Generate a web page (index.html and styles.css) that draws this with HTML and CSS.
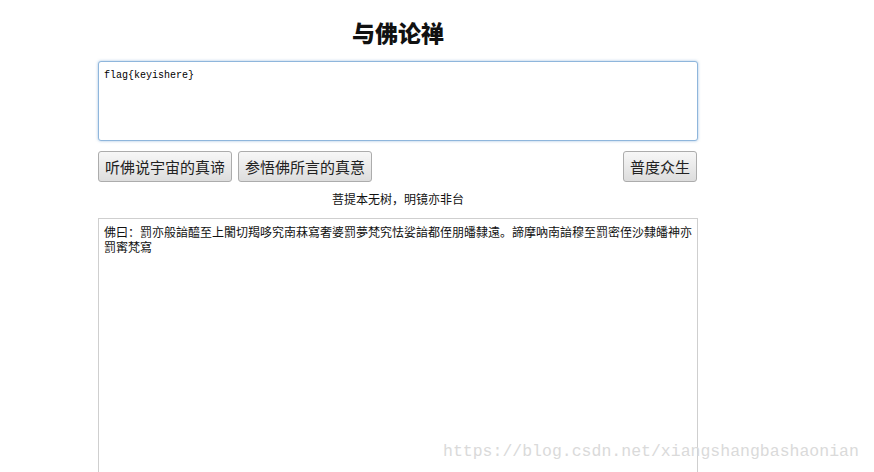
FILE: index.html
```html
<html>

<head>
  <meta charset="utf8">
  <title>与佛论禅</title>
  <link rel="stylesheet" href="styles.css">
</head>

<body>
  <div class="page">
    <h1 class="title">与佛论禅</h1>
    <textarea class="box box-input" spellcheck="false">flag{keyishere}</textarea>
    <div class="actions">
      <button class="btn">听佛说宇宙的真谛</button>
      <button class="btn">参悟佛所言的真意</button>
      <button class="btn btn-right">普度众生</button>
    </div>
    <p class="motto">菩提本无树，明镜亦非台</p>
    <textarea class="box box-output" spellcheck="false" readonly>佛曰：罰亦般諳醯至上闍切羯哆究南菻寫奢婆罰夢梵究怯娑諳都侄朋皤隸遠。諦摩吶南諳穆至罰密侄沙隸皤神亦罰寗梵寫</textarea>
  </div>
  <div class="watermark">https://blog.csdn.net/xiangshangbashaonian</div>
</body>

</html>
```
FILE: styles.css
```css
html,
body {
  margin: 0;
  overflow: hidden;
  background: #fff;
}

body {
  font: 12px/18px "Noto Sans CJK SC", "Liberation Sans", sans-serif;
  color: #111;
}

.page {
  width: 600px;
  margin-left: 98px;
  display: flex;
  flex-direction: column;
}

.title {
  margin: 0;
  padding-top: 17px;
  font-size: 23px;
  line-height: 30px;
  font-weight: 900;
  text-align: center;
  color: #111;
}

.box {
  box-sizing: border-box;
  width: 600px;
  resize: none;
  margin: 0;
  outline: none;
  background: #fff;
  color: #111;
}

.box-input {
  margin-top: 14px;
  height: 80px;
  padding: 7px 5px;
  border: 1px solid #8fb6dc;
  border-radius: 3px;
  box-shadow: 0 0 3px rgba(102, 153, 204, 0.6);
  font: 10px/13px "Liberation Mono", monospace;
  color: #000;
}

.actions {
  display: flex;
  gap: 6px;
  margin-top: 10px;
}

.btn {
  height: 31px;
  padding: 0 6px;
  border: 1px solid #acacac;
  border-radius: 3px;
  background: linear-gradient(#f7f7f7, #dddddd);
  font: 15px/29px "Noto Sans CJK SC", sans-serif;
  color: #222;
}

.btn-right {
  margin-left: auto;
  margin-right: 1px;
}

.motto {
  margin: 8px 0 0;
  text-align: center;
  font-size: 12px;
  line-height: 18px;
}

.box-output {
  margin-top: 10px;
  height: 270px;
  padding: 5px 3px 5px 5px;
  border: 1px solid #cfcfcf;
  font: 12px/15px "Noto Sans CJK SC", "Noto Sans CJK TC", sans-serif;
}

.watermark {
  position: absolute;
  left: 443px;
  top: 441px;
  font: 16.5px/22px "Liberation Mono", monospace;
  color: #dadada;
  white-space: nowrap;
}
```
